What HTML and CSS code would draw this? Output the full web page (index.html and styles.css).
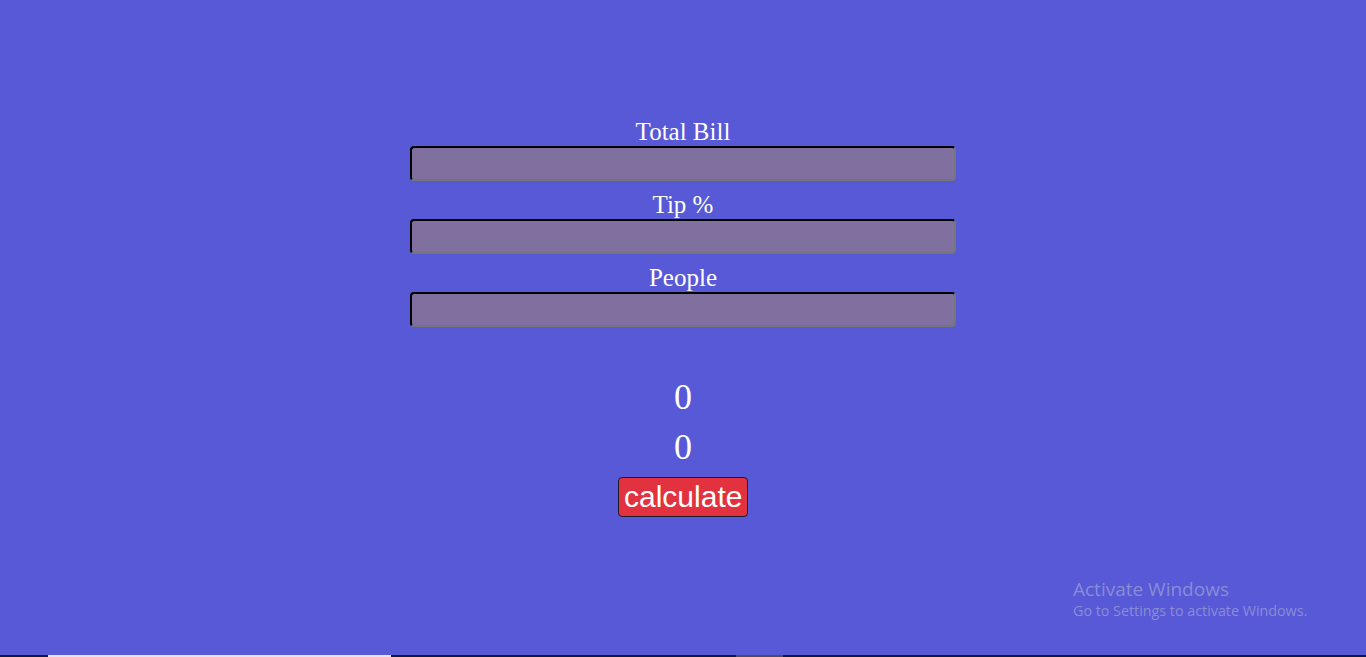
FILE: index.html
```html
<!DOCTYPE html>
<html>
<head>
<meta charset="utf-8">
<link rel="stylesheet" href="styles.css">
</head>
<body>
<main class="app">
  <div class="field">
    <label class="label">Total Bill</label>
    <input class="input" type="text">
  </div>
  <div class="field">
    <label class="label">Tip %</label>
    <input class="input" type="text">
  </div>
  <div class="field">
    <label class="label">People</label>
    <input class="input" type="text">
  </div>
  <div class="results">
    <div class="result">0</div>
    <div class="result">0</div>
  </div>
  <button class="calc">calculate</button>
</main>
<div class="watermark">
  <div class="wm-title">Activate Windows</div>
  <div class="wm-sub">Go to Settings to activate Windows.</div>
</div>
<div class="taskbar">
  <span class="tb-white"></span>
  <span class="tb-gray"></span>
</div>
</body>
</html>
```
FILE: styles.css
```css
html, body {
  margin: 0;
  padding: 0;
  height: 100%;
}
body {
  background: #5759d6;
  font-family: "Liberation Serif", "Times New Roman", serif;
  color: #ffffff;
  overflow: hidden;
  position: relative;
}
.app {
  display: flex;
  flex-direction: column;
  align-items: center;
  padding-top: 118px;
}
.field {
  display: flex;
  flex-direction: column;
  align-items: center;
  margin-bottom: 10px;
}
.label {
  font-size: 25px;
  line-height: 28px;
  height: 28px;
}
.input {
  box-sizing: border-box;
  width: 546px;
  height: 35px;
  margin: 0;
  background: #8070a0;
  border: 2px inset #767676;
  border-top-color: #222222;
  border-left-color: #222222;
  border-right-color: #767676;
  border-bottom-color: #767676;
  border-radius: 4px;
  outline: none;
}
.results {
  margin-top: 35px;
  display: flex;
  flex-direction: column;
  align-items: center;
}
.result {
  font-size: 36px;
  line-height: 50px;
  height: 50px;
}
.calc {
  margin-top: 5px;
  box-sizing: border-box;
  width: 130px;
  height: 40px;
  padding: 0 5px;
  background: #e2323f;
  color: #ffffff;
  border: 1px solid #1a1a2a;
  border-radius: 4px;
  font-family: "Liberation Sans", Arial, sans-serif;
  font-size: 30px;
  line-height: 36px;
}
.watermark {
  position: absolute;
  left: 1073px;
  top: 577px;
  color: #8a8cd6;
  font-family: "Open Sans", "Noto Sans", sans-serif;
}
.wm-title {
  font-size: 19px;
  line-height: 24px;
}
.wm-sub {
  font-size: 14.3px;
  line-height: 20px;
}
.taskbar {
  position: absolute;
  left: 0;
  right: 0;
  bottom: 0;
  height: 2px;
  background: #0b1a3f;
}
.tb-white {
  position: absolute;
  left: 48px;
  width: 343px;
  top: 0;
  height: 2px;
  background: #e6e6ee;
}
.tb-gray {
  position: absolute;
  left: 736px;
  width: 47px;
  top: 0;
  height: 2px;
  background: #4a4a6a;
}
```
